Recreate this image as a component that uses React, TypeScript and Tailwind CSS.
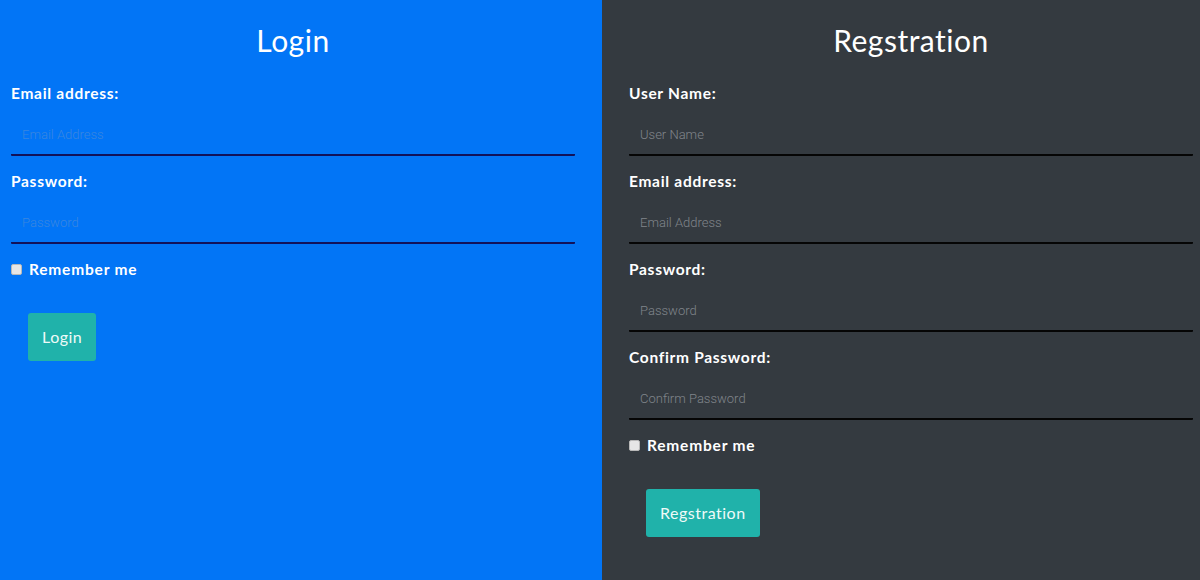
import React from "react";

type Field = { label: string; placeholder: string; type?: string };

function FormField({ field, tone }: { field: Field; tone: "blue" | "dark" }) {
  return (
    <div className="flex flex-col mb-[14px]">
      <label className="text-[15.5px] leading-[22px] font-bold text-white tracking-[0.7px]">
        {field.label}
      </label>
      <input
        type={field.type ?? "text"}
        placeholder={field.placeholder}
        className={
          tone === "blue"
            ? "mt-[10px] h-[42px] w-full bg-transparent pl-[11px] text-[13px] font-light outline-none border-b-2 border-[#12125a] rounded-[1px] placeholder:text-[#3a86e0] font-['Roboto',sans-serif]"
            : "mt-[10px] h-[42px] w-full bg-transparent pl-[11px] text-[13px] font-light outline-none border-b-2 border-[#050505] rounded-[1px] placeholder:text-[#80858b] font-['Roboto',sans-serif]"
        }
      />
    </div>
  );
}

function Remember() {
  return (
    <div className="flex items-center h-[22px]">
      <span className="w-[11px] h-[11px] bg-[#e6e6e6] border border-[#b8b8b8] rounded-[2px]" />
      <span className="ml-[7px] text-[15.5px] leading-[22px] font-bold text-white tracking-[0.8px]">
        Remember me
      </span>
    </div>
  );
}

function SubmitButton({ children }: { children: React.ReactNode }) {
  return (
    <button className="ml-[17px] mt-[33px] h-[48px] px-[14px] rounded-[3px] bg-[#20b2aa] text-[16px] tracking-[0.5px] text-[#eefaf8] self-start">
      {children}
    </button>
  );
}

export default function App() {
  const loginFields: Field[] = [
    { label: "Email address:", placeholder: "Email Address", type: "email" },
    { label: "Password:", placeholder: "Password", type: "password" },
  ];

  const registerFields: Field[] = [
    { label: "User Name:", placeholder: "User Name" },
    { label: "Email address:", placeholder: "Email Address", type: "email" },
    { label: "Password:", placeholder: "Password", type: "password" },
    { label: "Confirm Password:", placeholder: "Confirm Password", type: "password" },
  ];

  return (
    <div className="flex w-[1200px] h-[580px] overflow-hidden font-['Lato','Open_Sans',sans-serif]">
      {/* Login */}
      <div className="w-[602px] bg-[#0275f6] pl-[11px] pr-[27px] pt-[18px] flex flex-col">
        <h2 className="text-[30px] leading-[45px] text-white text-center tracking-[0.5px] mb-[19px]">Login</h2>
        {loginFields.map((f) => (
          <FormField key={f.label} field={f} tone="blue" />
        ))}
        <Remember />
        <SubmitButton>Login</SubmitButton>
      </div>

      {/* Registration */}
      <div className="flex-1 bg-[#343a40] pl-[27px] pr-[7px] pt-[18px] flex flex-col">
        <h2 className="text-[30px] leading-[45px] text-white text-center tracking-[0.5px] mb-[19px]">Regstration</h2>
        {registerFields.map((f) => (
          <FormField key={f.label} field={f} tone="dark" />
        ))}
        <Remember />
        <SubmitButton>Regstration</SubmitButton>
      </div>
    </div>
  );
}
